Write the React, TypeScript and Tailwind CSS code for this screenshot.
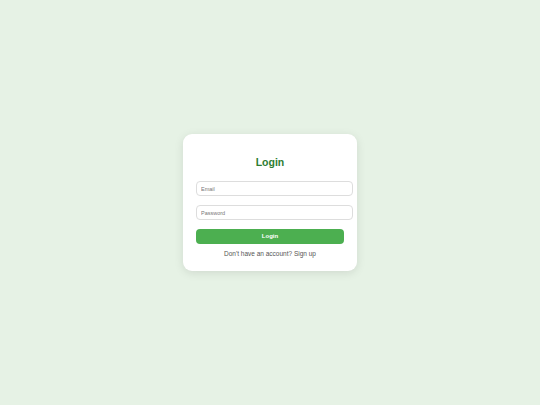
import React from "react";

export default function App() {
  return (
    <div
      className="min-h-screen w-full flex items-center justify-center bg-[#e6f2e5]"
      style={{ fontFamily: '"Liberation Sans", Arial, sans-serif' }}
    >
      <div className="w-[174px] rounded-[9px] bg-white px-[13px] pt-[13px] pb-[13px] shadow-[0_2px_10px_rgba(0,0,0,0.1)]">
        <h2 className="mt-[9px] mb-[12px] text-center text-[10.5px] leading-[13px] font-bold text-[#2e7d32]">
          Login
        </h2>
        <div className="flex flex-col gap-[9px]">
          <input
            type="email"
            placeholder="Email"
            className="box-border h-[15px] w-[157px] rounded-[4px] border border-[#dddddd] bg-white px-[4px] text-[5.5px] text-[#333] placeholder:text-[#777] outline-none"
          />
          <input
            type="password"
            placeholder="Password"
            className="box-border h-[15px] w-[157px] rounded-[4px] border border-[#dddddd] bg-white px-[4px] text-[5.5px] text-[#333] placeholder:text-[#777] outline-none"
          />
          <button className="h-[15px] w-[148px] rounded-[4px] bg-[#4caf50] text-[6px] font-bold text-white">
            Login
          </button>
        </div>
        <p className="mt-[5px] text-center text-[6.5px] leading-[9px] text-[#555]">
          Don't have an account? Sign up
        </p>
      </div>
    </div>
  );
}
